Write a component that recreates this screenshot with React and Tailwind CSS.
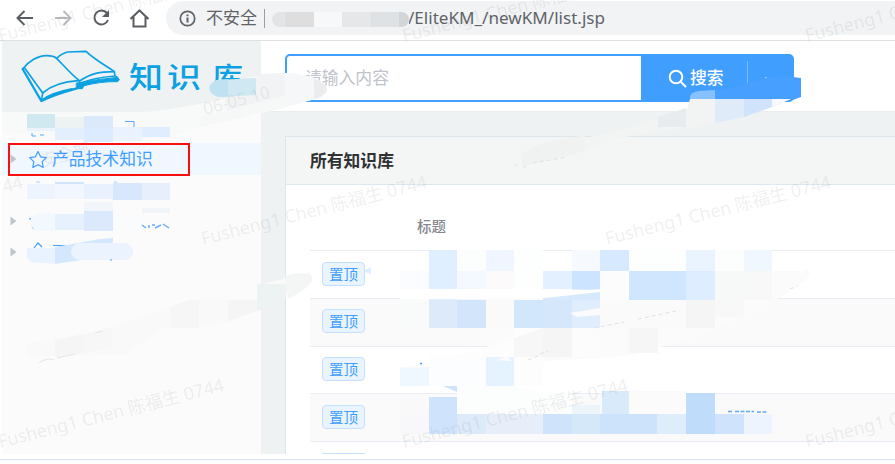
import React from "react";

const UI_FONT = "font-['Noto_Sans','Noto_Sans_CJK_SC',sans-serif]";
const CJK_FONT = "font-['Noto_Sans_CJK_SC',sans-serif]";

function BookLogo() {
  return (
    <svg width="104" height="56" viewBox="60 145 312 168" fill="none" stroke="#0ba1e2" strokeWidth="5" strokeLinejoin="round" strokeLinecap="round">
      <path d="M68 208 C85 186 112 168 140 168 C154 168 164 171 170 176 C188 194 212 223 239 244" />
      <path d="M68 208 L124 304 C160 285 198 275 234 265" strokeWidth="7" />
      <path d="M74 205 L128 280 C160 252 197 245 236 243" />
      <path d="M128 280 L125 300" />
      <path d="M170 176 C180 166 191 160 203 157 L258 155 C282 178 317 198 343 216 C299 216 274 220 239 244" />
      <path d="M343 216 L345 229 C308 232 270 238 244 250" />
      <path d="M230 250 L252 247 C285 240 320 237 343 234 L350 229 L358 240 L353 246 C320 245 284 250 252 258 L247 267 L230 267 Z" fill="#0ba1e2" strokeWidth="3" />
      <path d="M127 301 C150 283 185 274 216 268" strokeWidth="6" />
    </svg>
  );
}

function BrowserBar() {
  return (
    <div className="flex h-[41px] shrink-0 items-start border-b border-[#dfe1e4] bg-white">
      <svg className="shrink-0" width="166" height="40" viewBox="0 0 166 40" fill="none" stroke="#5a5e63" strokeWidth="2">
        <path d="M33 18H18M24.500 11L17.500 18L24.500 25" />
        <path d="M55 18H70M63.500 11L70.500 18L63.500 25" stroke="#b9bbbe" />
        <path d="M107 13.200A7 7 0 1 0 108 20" />
        <path d="M109 10V17H102Z" fill="#5a5e63" stroke="none" />
        <path d="M130.500 19L139.500 10.500L148.500 19M133.500 17V26.500H145.500V17" />
      </svg>
      <div className={`mt-px flex h-[34px] flex-1 items-center rounded-l-full bg-[#f1f3f4] pl-[13px] text-[17px] text-[#5f6368] ${UI_FONT}`}>
        <svg className="mr-[10px] shrink-0" width="17" height="17" viewBox="0 0 17 17" fill="none" stroke="#5f6368" strokeWidth="1.700">
          <circle cx="8.500" cy="8.500" r="7.200" />
          <path d="M8.500 7.500V12.500M8.500 4.500V6.200" strokeWidth="2" />
        </svg>
        <span className={`relative -top-px w-[51px] whitespace-nowrap ${CJK_FONT}`}>不安全</span>
        <span className="ml-[7px] h-[19px] w-px bg-[#9a9da1]" />
        <span className="ml-[7px] mt-[2px] flex h-[15px] w-[137px] overflow-hidden rounded-full">
          <i className="w-[13px] bg-[#e2e4e6]" />
          <i className="w-[29px] bg-[#dededf]" />
          <i className="w-[28px] bg-[#f7f8f9]" />
          <i className="w-[29px] bg-[#e5e7e9]" />
          <i className="w-[28px] bg-[#dfe2e4]" />
          <i className="flex-1 bg-[#d3d6d8]" />
        </span>
        <svg width="205" height="28" viewBox="0 0 205 28">
          <text x="-1" y="19.500" textLength="197" lengthAdjust="spacingAndGlyphs" fontSize="17" fontFamily="Noto Sans, sans-serif" fill="#5f6368">/EliteKM_/newKM/list.jsp</text>
        </svg>
      </div>
    </div>
  );
}

function Arrow({ className }) {
  return (
    <svg className={className} width="7" height="10" viewBox="0 0 7 10">
      <path d="M0.500 0.500L6.500 5L0.500 9.500Z" fill="#c0c4cc" />
    </svg>
  );
}

function Sidebar() {
  return (
    <aside className="flex w-[259px] shrink-0 flex-col bg-[#fbfbfb]">
      <div className="flex h-[71px] shrink-0 items-start bg-[#eef2f3] pl-[18px] pt-[7px]">
        <BookLogo />
        <div className={`ml-[5px] flex h-[56px] items-center text-[34px] font-medium leading-[56px] text-[#0ba1e2] ${CJK_FONT}`}>
          <span className="w-[38px] scale-y-[0.88]">知</span>
          <span className="w-[45px] scale-y-[0.84]">识</span>
          <span className="scale-y-[0.88] text-[31px]">库</span>
        </div>
      </div>
      <div className="h-[31px]" />
      <div className="flex h-[32px] items-center bg-[#f0f7ff]">
        <div className="ml-[6px] flex h-[33px] w-[182px] shrink-0 items-center border-2 border-[#fa0f0f]">
          <Arrow className="" />
          <svg className="ml-[11px] shrink-0" width="20" height="19" viewBox="0 0 20 19" fill="none" stroke="#409eff" strokeWidth="1.200" strokeLinejoin="round">
            <path d="M10 1.500L12.600 6.800L18.300 7.600L14.200 11.700L15.200 17.400L10 14.700L4.800 17.400L5.800 11.700L1.700 7.600L7.400 6.800Z" />
          </svg>
          <span className={`mb-[2px] ml-[4px] whitespace-nowrap text-[16.800px] leading-[24px] text-[#409eff] ${CJK_FONT}`}>产品技术知识</span>
        </div>
      </div>
      <div className="h-[30px]" />
      <div className="flex h-[31px] items-center pl-[8px]"><Arrow className="" /></div>
      <div className="flex h-[31px] items-center pl-[8px]"><Arrow className="" /></div>
    </aside>
  );
}

function SearchBox() {
  return (
    <div className={`flex h-[48px] w-[509px] overflow-hidden rounded-[5px] border-2 border-[#409eff] bg-[#409eff] text-[16.800px] ${CJK_FONT}`}>
      <div className="flex w-[354px] items-center bg-white pl-[18px] text-[#bfc3cb]">请输入内容</div>
      <div className="flex flex-1 items-center pl-[27px] font-medium text-white">
        <svg width="19" height="19" viewBox="0 0 19 19" fill="none" stroke="white" strokeWidth="2">
          <circle cx="8" cy="8" r="6.300" />
          <path d="M12.600 12.600L18 18" />
        </svg>
        <span className="ml-[3px]">搜索</span>
        <span className="ml-[23px] h-[34px] w-px bg-[#79bbff]" />
        <span className="ml-[17px] h-[2px] w-[2px] bg-[#9ccdff]" />
      </div>
    </div>
  );
}

const TAG = "flex h-[24px] w-[43px] items-center justify-center rounded-[4px] border border-[#c4e0ff] bg-[#eaf4ff] text-[14.500px] leading-none text-[#409eff]";

function Row({ className }) {
  return (
    <div className={`flex shrink-0 items-start border-b border-[#e8edf6] pl-[12px] ${className}`}>
      <span className={`${TAG} ${CJK_FONT}`}>置顶</span>
    </div>
  );
}

function Content() {
  return (
    <section className="flex min-w-0 flex-1 flex-col bg-[#eef2f3]">
      <div className="h-[71px] shrink-0 border-b border-[#e9edef] bg-white pl-[24px] pt-[13px]">
        <SearchBox />
      </div>
      <div className="ml-[24px] mt-[24px] flex min-h-0 flex-1 flex-col border-l border-t border-[#dde6ea] bg-white">
        <div className={`flex h-[48px] shrink-0 items-center border-b border-[#dfe8ec] bg-[#f4f6f5] pl-[24px] text-[16.800px] font-bold text-[#303133] ${CJK_FONT}`}>所有知识库</div>
        <div className="ml-[24px] flex min-h-0 flex-col overflow-hidden">
          <div className={`flex h-[66px] shrink-0 items-center border-b border-[#e8edf6] pl-[107px] pt-[16px] text-[14.500px] font-medium text-[#85888f] ${CJK_FONT}`}>标题</div>
          <Row className="h-[48px] pt-[11px]" />
          <Row className="h-[48px] bg-[#fafafa] pt-[10px]" />
          <Row className="h-[47px] pt-[10px]" />
          <Row className="h-[48px] bg-[#fafafa] pt-[11px]" />
          <div className="flex h-[12px] shrink-0 items-end overflow-hidden pl-[12px]">
            <span className="h-px w-[43px] rounded-t bg-[#c4e0ff]" />
          </div>
        </div>
      </div>
    </section>
  );
}

// Redaction blocks: [x, y, width, height, colour]
const BLOCKS = [
  [400, 271, 29, 18, "#fafcff"], [429, 250, 28, 50, "#e0efff"], [457, 250, 29, 21, "#fcfdfd"],
  [457, 271, 29, 29, "#f4f9ff"], [486, 250, 28, 21, "#f0f6ff"], [486, 271, 28, 18, "#fcfafa"],
  [514, 250, 29, 39, "#fdfefe"], [543, 271, 29, 18, "#e2f0ff"], [572, 250, 28, 21, "#f6faff"],
  [572, 271, 28, 29, "#cce4ff"], [600, 250, 29, 21, "#d7e9ff"], [600, 271, 29, 29, "#fcfcfc"],
  [629, 250, 57, 21, "#fdfefe"], [629, 271, 57, 29, "#d0e6ff"], [686, 250, 29, 21, "#e9f4ff"],
  [686, 271, 29, 29, "#deedff"], [715, 250, 29, 21, "#fcfefe"], [715, 271, 29, 29, "#f7f8f8"],
  [744, 250, 28, 21, "#f0f7ff"], [744, 271, 28, 29, "#f8f8f8"], [772, 271, 28, 15, "#fbfbfb"],
  [400, 300, 29, 28, "#f9fafa"], [429, 300, 28, 28, "#dceafa"], [457, 300, 29, 28, "#d2e5fb"],
  [486, 300, 28, 28, "#fafafa"], [514, 300, 29, 28, "#d2e6fc"], [543, 300, 29, 28, "#d5e7fa"],
  [572, 300, 28, 28, "#dfedfc"], [600, 300, 86, 28, "#fafafa"], [686, 300, 29, 28, "#f5f5f5"],
  [715, 300, 29, 17, "#f8f8f8"], [514, 328, 29, 29, "#f7f7f7"], [543, 328, 29, 29, "#f5f5f5"],
  [572, 328, 28, 29, "#fcfcfc"], [600, 328, 29, 28, "#fbfbfb"], [629, 328, 29, 25, "#f6f6f6"],
  [400, 367, 29, 19, "#f0f8ff"], [429, 357, 57, 29, "#fcfdfe"], [486, 357, 28, 29, "#e5f2ff"],
  [514, 357, 29, 29, "#fdfdfd"],
  [400, 398, 29, 16, "#faf9f9"], [429, 397, 28, 37, "#cfe4fc"], [457, 392, 115, 22, "#fcfdfd"],
  [400, 414, 29, 20, "#f8f8fa"], [457, 414, 29, 20, "#dceafa"], [486, 414, 57, 20, "#e7eef9"],
  [543, 414, 29, 20, "#cfe3fb"], [572, 405, 28, 9, "#edf4fa"], [572, 414, 28, 20, "#d5e8fa"],
  [602, 391, 27, 24, "#d9eafb"], [600, 414, 57, 20, "#cde3fc"], [629, 391, 57, 23, "#fbfbfb"],
  [657, 414, 29, 20, "#deedfb"], [686, 393, 29, 41, "#bfdcfb"], [715, 395, 29, 19, "#fbfafa"],
  [715, 414, 29, 20, "#cfe4fc"], [744, 414, 28, 20, "#edf4fd"],
  [27, 114, 28, 14, "#d0e8f0"], [55, 117, 30, 11, "#edf2f3"], [84, 116, 29, 12, "#dce9fb"],
  [113, 127, 29, 8, "#e9f2fd"], [142, 127, 28, 10, "#e0edff"], [27, 128, 28, 3, "#edf3fb"],
  [55, 128, 30, 12, "#e4effd"], [84, 128, 29, 14, "#dcebff"], [113, 134, 29, 7, "#eaf3ff"],
  [27, 184, 28, 15, "#edf4fd"], [55, 184, 30, 15, "#f1f6ff"], [84, 184, 29, 15, "#e8f1fd"],
  [113, 183, 29, 17, "#d9e7fd"], [142, 183, 28, 17, "#e6effb"],
  [84, 202, 29, 12, "#f2f6fb"], [142, 208, 28, 5, "#f1f5fa"], [55, 214, 30, 16, "#e7f0fd"],
  [84, 211, 29, 20, "#dce9fd"], [113, 215, 28, 16, "#fafbfd"],
];

const WATERMARKS = [[0, 42], [404, 42], [807, 42], [-201, 245], [203, 245], [607, 245], [0, 448], [404, 448], [807, 448]];

function Overlay() {
  return (
    <svg className="pointer-events-none absolute inset-0" width="895" height="464" viewBox="0 0 895 464">
      {/* sweep across the foot of the logo */}
      <path d="M2 112H145C175 109 202 104 230 97L250 77L275 73C300 73 326 80 327 89C326 98 300 103 280 109L227 121C190 130 165 139 145 143L79 143L76 139L55 137L2 132Z" fill="#f8f9f9" />
      <path d="M225 97L261 74L290 73V106L228 119Z" fill="#f2f3f4" />
      <path d="M285 73C310 74 326 80 327 90C325 96 317 99 307 101L285 107Z" fill="#f6f7f8" />
      <path d="M314 79C323 82 327 86 327 90C325 95 320 98 314 99Z" fill="#ececef" />
      <path d="M217 80Q207 84 210 91Q214 97 221 97L256 95V78Z" fill="#d0e8f1" />
      <path d="M217 80Q207 84 210 91Q214 97 221 97H228V79Z" fill="#bfe1f0" />

      {/* sweep below the search button */}
      <path d="M690 100Q688 92 699 91L715 90C745 87 759 76 785 76L801 78V97L790 101Z" fill="#479fff" />
      <path d="M699 91L715 90V99H690Q689 92 699 91Z" fill="#86c0ff" />
      <path d="M690 99H791L772 107C735 122 680 129 640 134L608 141L585 151C560 158 535 164 520 166L526 156L565 141C610 135 660 119 687 109Z" fill="#f2f4f4" />
      <path d="M715 99H744V117L715 123Z" fill="#e0ebfa" />
      <path d="M744 99H790L772 107L744 117Z" fill="#cfe4fb" />
      <path d="M772 99H790L772 107Z" fill="#f7f9fc" />
      <path d="M658 117L686 108V127H658Z" fill="#e9ecee" />
      <path d="M522 154C534 144 560 137 585 136V151L522 166Z" fill="#f0f2f2" />

      {/* grey sweep over the lower half of the sidebar */}
      <path d="M27 344L85 335L190 300H257L263 284L310 272L313 281L292 292L261 308L228 321L199 328H165L125 354L80 355L27 357Z" fill="#f9f9f9" />
      <path d="M55 340L84 334V353L55 357Z" fill="#f5f5f5" />
      <path d="M84 334L112 328V348L84 353Z" fill="#f7f7f7" />
      <path d="M170 307L190 300H199V328H170Z" fill="#f6f6f6" />
      <path d="M228 300H257V311L228 321Z" fill="#f5f5f5" />
      <path d="M257 284H286V298L257 311Z" fill="#edf2f2" />
      <path d="M285 276Q305 270 312 277Q314 286 288 299Z" fill="#f4f5f5" />
      <path d="M39 363Q47 357 54 360M57 358L75 354M95 333L103 331" fill="none" stroke="#e5e5e5" />

      {/* pale smears between table rows */}
      <path d="M486 297L600 292L800 273Q814 265 808 278L779 298L744 317L686 340L629 356L560 360L430 367L487 347Z" fill="#fbfbfb" />

      {BLOCKS.map(([x, y, w, h, c]) => (
        <rect key={`${x}-${y}`} x={x} y={y} width={w} height={h} fill={c} />
      ))}

      <path d="M400 289H543L600 290L545 298H486V299H400Z" fill="#fff" />
      <path d="M543 298L600 290V300H543Z" fill="#d6e9fd" />
      <path d="M545 298L600 292V289L543 294Z" fill="#fff" />
      <path d="M570 313L600 308V315L577 317Z" fill="#fbfbfb" />
      <path d="M400 368L429 363L487 347L543 328L514 328V357H429V367Z" fill="#fdfdfd" />
      <path d="M497 360L508 356L511 361Z" fill="#fcfcfc" />
      <path d="M443 386H457V392Z" fill="#cfe4fc" />
      <path d="M457 386L514 386Q550 395 572 404V414H457Z" fill="#fcfdfd" />
      <path d="M365 270L371 267V274L365 272Z" fill="#deedff" />
      <path d="M728 411.500H732M735 411.500H754M757 412H768" fill="none" stroke="#62a9f4" strokeWidth="1.300" strokeDasharray="4 1.500" />
      <path d="M420 363.500H422" stroke="#409eff" strokeWidth="1.500" />
      <path d="M514 166L519 163M523 168L528 165M533 163L567 157M528 360L538 356M540 354L548 351M594 328L624 322M638 319L676 311M790 289L798 286" fill="none" stroke="#e0e2e2" strokeDasharray="4 3" />

      {/* remains of covered sidebar labels */}
      <path d="M125 121.500H134V127M32 133V136H36M40 135H44" fill="none" stroke="#5aa8f7" />
      <path d="M36 182H40M55 183H84M114 182H117" stroke="#a8d0fb" />
      <path d="M30 218V219.500M32 225L34 229" stroke="#409eff" strokeWidth="1.500" />
      <path d="M142 225L146 228M149 225V228M152 225H155M155 228L161 225M163 224L169 228" stroke="#69aef5" strokeWidth="1.500" />
      <path d="M31 225Q29 214 46 213L55 214V231H35Z" fill="#f3f8ff" />
      <path d="M34 248L38 243L42 247M53 245.500H68" fill="none" stroke="#409eff" strokeWidth="1.200" />
      <path d="M27 248H55V264L31 262L27 258Z" fill="#e9f3ff" />
      <path d="M55 247L100 239L113 238V258L82 260L55 264Z" fill="#d4e7fc" />
      <rect x="71" y="243" width="62" height="17" rx="8.500" fill="#eaf3fe" />
      <path d="M110 260H112" stroke="#409eff" />

      <g fill="#606773" fillOpacity="0.11" fontFamily="Noto Sans, Noto Sans CJK SC, sans-serif" fontSize="18">
        {WATERMARKS.map(([x, y]) => (
          <text key={`${x}-${y}`} transform={`translate(${x} ${y}) rotate(-14.300)`} textLength="232" lengthAdjust="spacingAndGlyphs">Fusheng1 Chen 陈福生 0744</text>
        ))}
        <text transform="translate(205 115) rotate(-15)" fontSize="17">06-05 10</text>
        <text transform="translate(42 167) rotate(-15)" fontSize="17">安全部</text>
      </g>
      {/* sweep hiding the lower half of the date stamp */}
      <path d="M200 117L232 109L285 96L288 106L228 121L200 127Z" fill="#f6f7f7" />
    </svg>
  );
}

export default function App() {
  return (
    <div className="relative flex h-[464px] w-[895px] flex-col overflow-hidden bg-white">
      <BrowserBar />
      <main className="flex h-[413px] shrink-0 pl-[2px]">
        <Sidebar />
        <Content />
      </main>
      <div className="h-[6px] shrink-0 border-b border-[#d7e5fa]" />
      <Overlay />
    </div>
  );
}
